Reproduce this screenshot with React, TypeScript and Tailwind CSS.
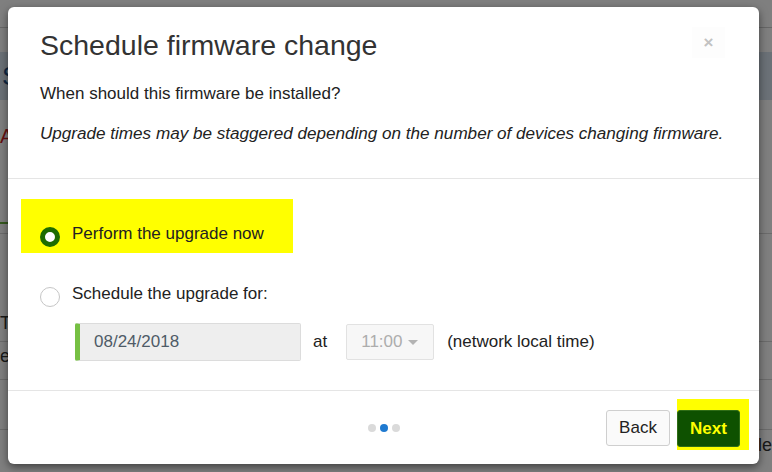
const font = { fontFamily: '"Liberation Sans", Arial, sans-serif' };

function Radio({ checked }: { checked?: boolean }) {
  return checked ? (
    <span className="block h-[20px] w-[20px] shrink-0 rounded-full border-[5px] border-[#1d6c00] bg-white" />
  ) : (
    <span className="block h-[20px] w-[20px] shrink-0 rounded-full border border-[#c6c6c6] bg-white" />
  );
}

function BackgroundPage() {
  return (
    <div className="flex h-[472px] w-[772px] flex-col bg-white">
      <div className="h-[28px] shrink-0 border-b border-[#cfcfcf]" />
      <div className="h-[24px] shrink-0" />
      <div className="flex h-[48px] shrink-0 items-center bg-[#d7e3ee] pl-[2px] text-[26px] text-[#1d4f87]">
        S
      </div>
      <div className="flex h-[72px] shrink-0 items-center text-[20px] text-[#cc1f1f]">A</div>
      <div className="h-[50px] shrink-0" />
      <div className="h-[2px] w-[10px] shrink-0 bg-[#6bb33c]" />
      <div className="h-[10px] shrink-0 border-b border-[#d6d6d6]" />
      <div className="flex h-[107px] shrink-0 items-end pb-[4px] text-[18px] text-[#333]">T</div>
      <div className="flex h-[38px] shrink-0 items-start border-t border-[#d6d6d6] pt-[1px] text-[18px] text-[#333]">
        e
      </div>
      <div className="h-[50px] shrink-0 border-t border-[#d6d6d6]" />
      <div className="flex shrink-0 justify-end border-t border-[#d6d6d6] pt-[2px] text-[18px] text-[#333]">
        ple
      </div>
    </div>
  );
}

export default function App() {
  return (
    <div className="relative h-[472px] w-[772px] overflow-hidden" style={font}>
      <BackgroundPage />
      <div className="absolute inset-0 bg-black/50" />

      {/* Modal */}
      <div className="absolute left-[8px] top-[7px] flex h-[457px] w-[751px] flex-col rounded-[6px] bg-white text-[#222] shadow-[0_3px_9px_rgba(0,0,0,0.5)]">
        {/* Header */}
        <div className="relative border-b border-[#e5e5e5] px-[32px] pb-[33px] pt-[20px]">
          <h1 className="text-[28.5px] font-normal leading-[36px] text-[#333]">Schedule firmware change</h1>
          <button className="absolute right-[34px] top-[20px] flex h-[31px] w-[33px] items-center justify-center bg-[#fdfdfd] text-[17px] font-bold leading-none text-[#c2c2c2]">
            ×
          </button>
          <p className="mt-[20px] text-[17px] leading-[22px]">When should this firmware be installed?</p>
          <p className="mt-[18px] text-[17.1px] italic leading-[22px]">
            Upgrade times may be staggered depending on the number of devices changing firmware.
          </p>
        </div>

        {/* Body */}
        <div className="flex flex-1 flex-col border-b border-[#e5e5e5] px-[13px] pt-[20px]">
          <label className="flex h-[54px] w-[272px] items-end gap-[12px] bg-[#ffff00] pb-[6px] pl-[19px] text-[17px]">
            <Radio checked />
            <span className="mb-[2px] leading-[22px]">Perform the upgrade now</span>
          </label>
          <label className="mt-[34px] flex items-center gap-[12px] pl-[19px] text-[17px]">
            <Radio />
            <span className="-mt-[6px] leading-[22px]">Schedule the upgrade for:</span>
          </label>
          <div className="mt-[16px] flex items-center pl-[54px] text-[17px]">
            <div className="flex h-[38px] w-[226px] items-center rounded-[2px] border border-[#dcdcdc] border-l-[5px] border-l-[#76c043] bg-[#eeeeee] pl-[14px] text-[#4e5b67]">
              08/24/2018
            </div>
            <span className="ml-[12px]">at</span>
            <div className="ml-[19px] flex h-[36px] w-[88px] items-center gap-[6px] rounded-[2px] border border-[#e2e2e2] bg-[#f7f7f7] pl-[14px] text-[#adadad]">
              11:00
              <span className="mt-[1px] h-0 w-0 border-x-[5px] border-t-[5px] border-x-transparent border-t-[#b3b3b3]" />
            </div>
            <span className="ml-[13px]">(network local time)</span>
          </div>
        </div>

        {/* Footer */}
        <div className="grid h-[73px] shrink-0 grid-cols-[1fr_auto_1fr] items-start">
          <div />
          <div className="mt-[33px] flex gap-[4px]">
            <span className="h-[8px] w-[8px] rounded-full bg-[#dadada]" />
            <span className="h-[8px] w-[8px] rounded-full bg-[#1f7ad0]" />
            <span className="h-[8px] w-[8px] rounded-full bg-[#dadada]" />
          </div>
          <div className="flex justify-end pr-[10px] pt-[8px]">
            <button className="mt-[11px] h-[36px] w-[64px] rounded-[3px] border border-[#cfcfcf] bg-[#fafafa] text-[17px] text-[#222]">
              Back
            </button>
            <div className="ml-[7px] h-[51px] w-[72px] bg-[#ffff00] pt-[11px]">
              <button className="h-[37px] w-[63px] rounded-[3px] border border-[#2f6e16] bg-[#0e5100] text-[17px] font-bold text-[#ffff00]">
                Next
              </button>
            </div>
          </div>
        </div>
      </div>
    </div>
  );
}
